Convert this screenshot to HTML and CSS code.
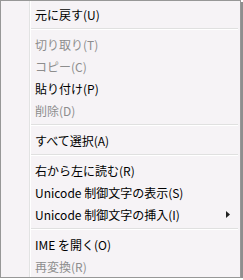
FILE: index.html
```html
<!DOCTYPE html>
<html lang="ja">
<head>
  <meta charset="UTF-8" />
  <title>コンテキスト メニュー</title>
  <link rel="stylesheet" href="styles.css">
</head>
<body>
  <div class="menu">
    <div class="item">元に戻す(U)</div>
    <div class="sep"></div>
    <div class="item off">切り取り(T)</div>
    <div class="item off">コピー(C)</div>
    <div class="item">貼り付け(P)</div>
    <div class="item off">削除(D)</div>
    <div class="sep"></div>
    <div class="item">すべて選択(A)</div>
    <div class="sep"></div>
    <div class="item">右から左に読む(R)</div>
    <div class="item">Unicode 制御文字の表示(S)</div>
    <div class="item sub">Unicode 制御文字の挿入(I)
      <svg class="arrow" width="4" height="7" viewBox="0 0 4 7"><path d="M0 0 L4 3.5 L0 7 Z" fill="#222"/></svg>
    </div>
    <div class="sep"></div>
    <div class="item">IME を開く(O)</div>
    <div class="item off">再変換(R)</div>
  </div>
</body>
</html>
```

FILE: styles.css
```css
body {
  margin: 0;
  background: #fff;
  font-family: "Noto Sans CJK JP", "Noto Sans", sans-serif;
  font-size: 12px;
}
.menu {
  width: 239px;
  height: 274px;
  padding-top: 2px;
  border: 1px solid #979797;
  background-color: #f6f3f6;
  background-image: linear-gradient(to right, transparent 28px, #e2e3e3 28px, #e2e3e3 29px, #fff 29px, #fff 30px, transparent 30px);
  box-shadow: 2px 2px 0 #8e8e8e;
  overflow: hidden;
}
.item {
  display: flex;
  align-items: center;
  height: 22px;
  padding-left: 34px;
  padding-right: 10px;
  color: #000;
  white-space: nowrap;
}
.item.off {
  color: #8d8d8d;
}
.item.sub {
  justify-content: space-between;
}
.arrow {
  margin-right: 0;
}
.sep {
  height: 8px;
  margin-left: 30px;
  margin-right: 2px;
  background: linear-gradient(to bottom, transparent 3px, #e0e0e0 3px, #e0e0e0 4px, #fff 4px, #fff 5px, transparent 5px);
}
```
